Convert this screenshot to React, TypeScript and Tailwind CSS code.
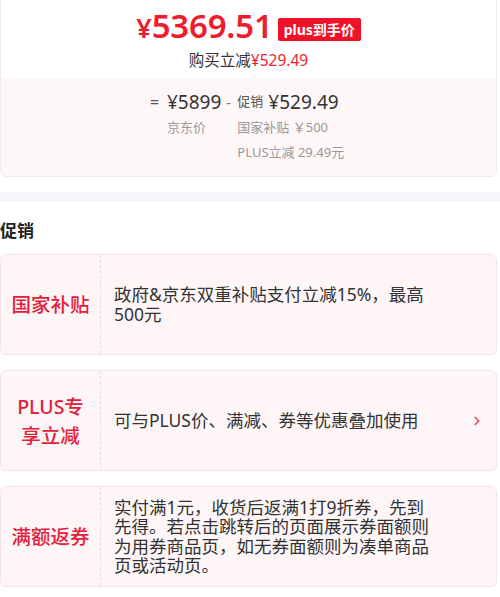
import { ChevronRight } from "lucide-react";

const promos = [
  {
    label: ["国家补贴"],
    text: "政府&京东双重补贴支付立减15%，最高500元",
    arrow: false,
  },
  {
    label: ["PLUS专", "享立减"],
    text: "可与PLUS价、满减、券等优惠叠加使用",
    arrow: true,
  },
  {
    label: ["满额返券"],
    text: "实付满1元，收货后返满1打9折券，先到先得。若点击跳转后的页面展示券面额则为用券商品页，如无券面额则为凑单商品页或活动页。",
    arrow: false,
  },
];

export default function App() {
  return (
    <div className="w-[500px] h-[597px] overflow-hidden bg-white font-['Noto_Sans','Noto_Sans_CJK_SC',sans-serif] text-[#333]">
      {/* Price card */}
      <div className="w-[497px] -mt-[4px] rounded-md border border-[#f7eaeb] overflow-hidden">
        <div className="bg-white pt-[12px] h-[81px] flex flex-col items-center">
          <div className="flex items-end gap-[5px]">
            <div className="flex items-baseline text-[#ee1c2e] font-semibold leading-none">
              <span className="text-[27px]">¥</span>
              <span className="text-[33px] tracking-[-0.2px]">5369.51</span>
            </div>
            <span className="mb-[1px] h-[23px] px-[6px] flex items-center rounded-[2px] bg-[#ee1328] text-white text-[14px] font-bold leading-none">
              plus到手价
            </span>
          </div>
          <div className="mt-[9px] text-[15.5px] leading-[18px]">
            购买立减<span className="text-[#ee1c2e]">¥529.49</span>
          </div>
        </div>
        <div className="relative bg-[#fef7f7] h-[98px] pt-[12px]">
          <div className="absolute left-[248px] -top-[5px] w-0 h-0 border-x-[5px] border-x-transparent border-b-[5px] border-b-[#fef7f7]" />
          <div className="flex pl-[149px]">
            <div className="flex flex-col">
              <div className="flex items-center h-[24px]">
                <span className="text-[16px] text-[#555] w-[17px]">=</span>
                <span className="text-[19px] text-[#333]">¥5899</span>
              </div>
              <div className="pl-[17px] mt-[1px] text-[13px] text-[#999] leading-[24px]">京东价</div>
            </div>
            <div className="flex h-[24px] items-center">
              <span className="ml-[5px] w-[11px] text-[14px] text-[#777]">-</span>
            </div>
            <div className="flex flex-col">
              <div className="flex items-center h-[24px]">
                <span className="text-[13px] text-[#555] mr-[5px]">促销</span>
                <span className="text-[19px] text-[#333]">¥529.49</span>
              </div>
              <div className="mt-[1px] text-[13px] text-[#999] leading-[24px]">国家补贴 ￥500</div>
              <div className="mt-[1px] text-[13px] text-[#999] leading-[24px]">PLUS立减 29.49元</div>
            </div>
          </div>
        </div>
      </div>

      <div className="mt-[15px] h-[10px] bg-[#f5f6fa]" />

      {/* Promotions */}
      <h2 className="mt-[19px] text-[17px] font-bold leading-[20px] text-[#222]">促销</h2>
      <div className="mt-[13px] flex flex-col gap-[15px] w-[497px]">
        {promos.map((p) => (
          <div
            key={p.text}
            className="flex min-h-[101px] rounded-md border border-[#f5e4e6] bg-[#fdf5f6]"
          >
            <div className="w-[100px] shrink-0 flex flex-col items-center justify-center border-r border-dashed border-[#ead9dc] text-[19.5px] font-medium leading-[29px] text-[#e3203a]">
              {p.label.map((l) => (
                <span key={l}>{l}</span>
              ))}
            </div>
            <div className="flex-1 flex items-center pl-[13px] pr-[12px]">
              <p className="w-[325px] text-[17.5px] leading-[19.5px] text-[#333]">{p.text}</p>
              {p.arrow && (
                <ChevronRight className="ml-auto w-[14px] h-[14px] text-[#e4506a]" strokeWidth={3} />
              )}
            </div>
          </div>
        ))}
      </div>
    </div>
  );
}
